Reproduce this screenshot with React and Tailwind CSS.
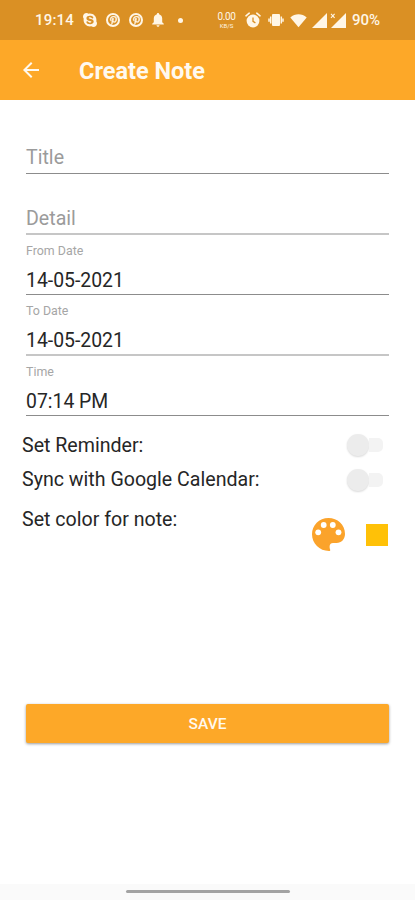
import React, { useState } from "react";
import { FaPinterestP, FaSkype } from "react-icons/fa";
import { MdArrowBack } from "react-icons/md";

const PinterestIcon = ({ className }) => (
  <span className={`flex h-[14px] w-[14px] items-center justify-center rounded-full border-2 border-[#fff6e6] ${className}`}>
    <FaPinterestP className="h-[9px] w-[9px] stroke-[#fff6e6] stroke-[24px]" />
  </span>
);

const BellIcon = () => (
  <svg className="ml-[9px] h-[14px] w-3" viewBox="0 0 12 14" fill="currentColor">
    <path d="M6 0c.7 0 1.1.5 1.1 1.2C9 1.8 10.200 3.500 10.200 5.500v3.700l1.600 1.600v.8H.2v-.8l1.600-1.600V5.500c0-2 1.200-3.700 3.100-4.300C4.900.5 5.300 0 6 0z" />
    <path d="M4.500 12.300h3c0 .9-.6 1.500-1.500 1.500s-1.500-.6-1.500-1.500z" />
  </svg>
);

const AlarmIcon = () => (
  <svg className="ml-[9px] h-4 w-4" viewBox="0 0 16 16" fill="none">
    <circle cx="8" cy="9" r="6.4" fill="#fff6e6" />
    <path d="M1 3.8 4.2 1.2M15 3.8 11.8 1.2" stroke="#fff6e6" strokeWidth="1.6" strokeLinecap="round" />
    <path d="M8 5.4v4l2.4 1.5" stroke="#da9024" strokeWidth="1.3" />
  </svg>
);

const VibrateIcon = () => (
  <svg className="ml-[7px] h-4 w-4" viewBox="0 0 16 16" fill="none">
    <rect x="4" y="2" width="8" height="12" rx="1" fill="#fff6e6" />
    <path d="M2.7 4.5v7M13.3 4.5v7M1 6.5v3.2M15 6.5v3.2" stroke="#fff6e6" strokeWidth="1.5" />
  </svg>
);

const WifiIcon = () => (
  <svg className="ml-[6px] h-[15px] w-[17px]" viewBox="0 0 17 15">
    <path d="M.3 4.5C5 .2 12 .2 16.7 4.5L8.5 14.2z" fill="#fff6e6" />
  </svg>
);

const PaletteIcon = () => (
  <svg className="h-[33px] w-[33px]" viewBox="0 0 33 33">
    <path d="M16.5 0C7 0 0 7.2 0 16.3 0 25.5 7.5 33 17 33c1 0 1.4-.5 1.2-1.3-1.2-3.3-.6-6.7 2.8-6.7h3.500c5 0 8.500-4 8.500-9C33 6.500 25.500 0 16.500 0z" fill="#fba32b" />
    <g fill="#fff">
      <circle cx="6.2" cy="14.3" r="2.9" />
      <circle cx="11.7" cy="7" r="2.9" />
      <circle cx="20.8" cy="7" r="2.9" />
      <circle cx="26.5" cy="14.3" r="2.9" />
    </g>
  </svg>
);

const StatusBar = () => (
  <div className="flex h-10 items-center bg-[#da9024] pl-[35px] text-[#fff6e6]">
    <span className="w-[47px] text-[15px] font-medium tracking-[0.2px]">19:14</span>
    <FaSkype className="h-4 w-4" />
    <PinterestIcon className="ml-2" />
    <PinterestIcon className="ml-[9px]" />
    <BellIcon />
    <span className="ml-[14px] h-[5px] w-[5px] rounded-full bg-[#fff6e6]" />
    <span className="ml-[34px] flex w-[19px] flex-col items-center">
      <span className="text-[10px] leading-[11px] tracking-[-0.4px]">0.00</span>
      <span className="text-[6px] leading-[7px]">KB/S</span>
    </span>
    <AlarmIcon />
    <VibrateIcon />
    <WifiIcon />
    <svg className="ml-[5px] h-[15px] w-[15px]" viewBox="0 0 15 15">
      <path d="M15 0v15H0z" fill="#fff6e6" />
    </svg>
    <svg className="ml-[3px] h-[15px] w-4" viewBox="0 0 16 15">
      <path d="M16 0v15H1z" fill="#fff6e6" />
      <path d="M1 .8l3.6 4M4.6 .8L1 4.8" stroke="#fff6e6" strokeWidth="1.1" />
    </svg>
    <span className="ml-[6px] text-[15px] font-medium">90%</span>
  </div>
);

const DateField = ({ label, value, thick }) => (
  <div className="flex flex-col">
    <span className="h-[30px] pt-2 text-[12.4px] leading-4 text-[#a6a6a6]">{label}</span>
    <span className="h-[29px] pt-px text-[19.4px] leading-[29px] text-[#262626]">{value}</span>
    <span className={thick ? "h-[2px] bg-[#c6c6c6]" : "h-px bg-[#8c8c8c]"} />
  </div>
);

const Toggle = () => {
  const [on, setOn] = useState(false);

  return (
    <button
      type="button"
      role="switch"
      aria-checked={on}
      onClick={() => setOn(!on)}
      className="flex h-6 w-9 items-center"
    >
      <span className={`h-[22px] w-[22px] shrink-0 rounded-full bg-[#ececec] shadow-[0_1px_2px_rgba(0,0,0,0.15)] ${on ? "order-2" : ""}`} />
      <span className="h-[14px] flex-1 rounded-r-[5px] bg-[#f3f3f3]" />
    </button>
  );
};

const App = () => {
  return (
    <div className="flex h-[900px] w-[415px] flex-col bg-white font-[Roboto,sans-serif]">
      <StatusBar />
      <header className="flex h-[60px] items-center bg-[#fda828] pl-[19px] text-[#fff9ef]">
        <MdArrowBack className="h-6 w-6" />
        <h1 className="ml-9 pt-[3px] text-[23.5px] font-bold">Create Note</h1>
      </header>

      <main className="flex flex-1 flex-col">
        <div className="mx-[26px] flex flex-col">
          <div className="flex h-[74px] items-end border-b border-[#8c8c8c] pb-px text-[19.6px] leading-7 text-[#9b9b9b]">Title</div>
          <div className="flex h-[61px] items-end border-b-2 border-[#c6c6c6] text-[19.6px] leading-7 text-[#9b9b9b]">Detail</div>
          <DateField label="From Date" value="14-05-2021" />
          <DateField label="To Date" value="14-05-2021" thick />
          <DateField label="Time" value="07:14 PM" />
        </div>

        <div className="flex flex-col pt-[11px] pr-8 pl-[22px] text-[19.6px] text-[#262626]">
          <div className="flex h-[35px] items-center justify-between">
            <span className="pt-[2px]">Set Reminder:</span>
            <Toggle />
          </div>
          <div className="flex h-[35px] items-center justify-between">
            <span>Sync with Google Calendar:</span>
            <Toggle />
          </div>
        </div>

        <div className="flex h-[56px] justify-between pr-[27px] pl-[22px]">
          <span className="pt-[9px] text-[19.6px] leading-7 text-[#262626]">Set color for note:</span>
          <div className="flex items-center gap-[21px] pt-[19px]">
            <PaletteIcon />
            <span className="h-[22px] w-[22px] bg-[#ffc107]" />
          </div>
        </div>

        <button
          type="button"
          className="mx-[26px] mt-auto mb-[141px] h-[39px] rounded-[2px] bg-[#fda828] pt-[2px] text-[15.5px] font-medium text-[#fff9ef] shadow-[0_1px_3px_rgba(0,0,0,0.4)]"
        >
          SAVE
        </button>
      </main>

      <footer className="flex h-4 justify-center bg-[#fafafa] pt-[6px]">
        <span className="h-[3px] w-[164px] rounded-full bg-[#a3a3a3]" />
      </footer>
    </div>
  );
};

export default App;
